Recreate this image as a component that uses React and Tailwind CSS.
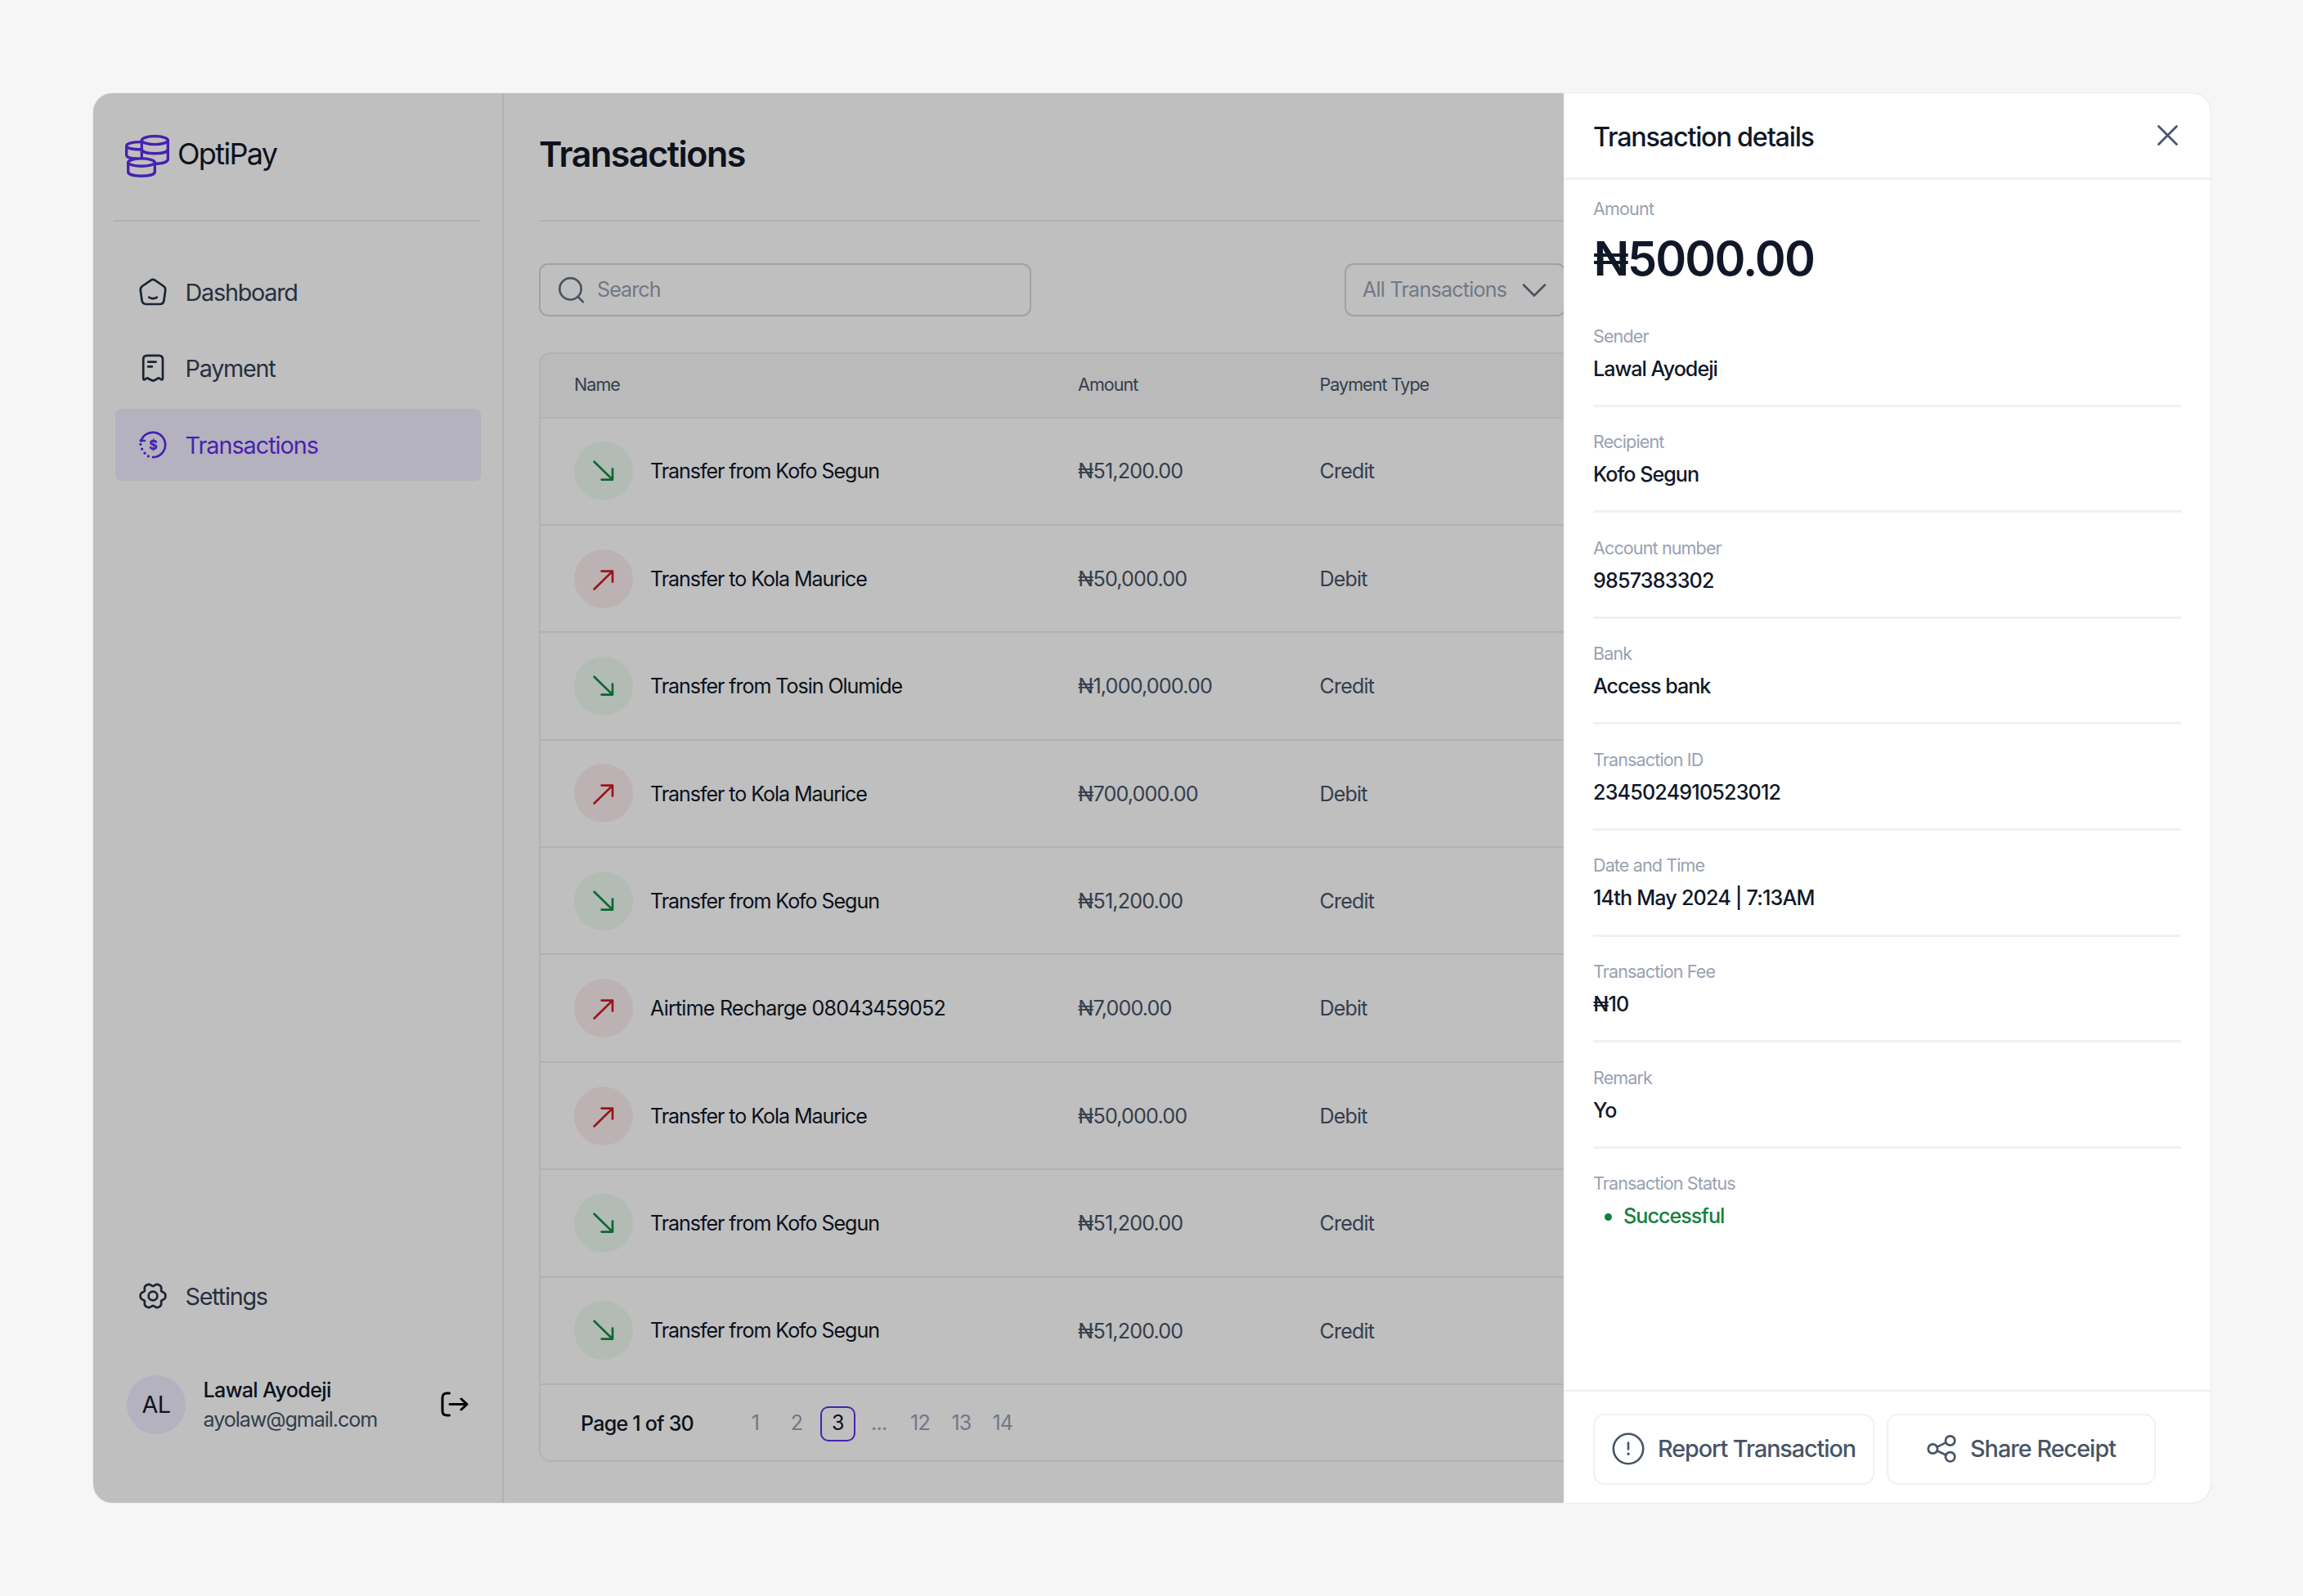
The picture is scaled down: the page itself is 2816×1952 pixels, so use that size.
import { useState } from 'react';

const transactions = [
    { name: 'Transfer from Kofo Segun', amount: '₦51,200.00', type: 'Credit' },
    { name: 'Transfer to Kola Maurice', amount: '₦50,000.00', type: 'Debit' },
    { name: 'Transfer from Tosin Olumide', amount: '₦1,000,000.00', type: 'Credit' },
    { name: 'Transfer to Kola Maurice', amount: '₦700,000.00', type: 'Debit' },
    { name: 'Transfer from Kofo Segun', amount: '₦51,200.00', type: 'Credit' },
    { name: 'Airtime Recharge 08043459052', amount: '₦7,000.00', type: 'Debit' },
    { name: 'Transfer to Kola Maurice', amount: '₦50,000.00', type: 'Debit' },
    { name: 'Transfer from Kofo Segun', amount: '₦51,200.00', type: 'Credit' },
    { name: 'Transfer from Kofo Segun', amount: '₦51,200.00', type: 'Credit' },
];

const details = [
    { label: 'Sender', value: 'Lawal Ayodeji' },
    { label: 'Recipient', value: 'Kofo Segun' },
    { label: 'Account number', value: '9857383302' },
    { label: 'Bank', value: 'Access bank' },
    { label: 'Transaction ID', value: '2345024910523012' },
    { label: 'Date and Time', value: '14th May 2024 | 7:13AM' },
    { label: 'Transaction Fee', value: '₦10' },
    { label: 'Remark', value: 'Yo' },
];

const pages = ['1', '2', '3', '...', '12', '13', '14'];

const hasDigits = (text) => /\d/.test(text);

function Icon({ size = 36, width = 2.7, className, children }) {
    return (
        <svg
            width={size} height={size} viewBox="0 0 36 36" fill="none" stroke="currentColor"
            strokeWidth={width} strokeLinecap="round" strokeLinejoin="round" className={className}
        >
            {children}
        </svg>
    );
}

function Logo() {
    return (
        <svg width="54" height="52" viewBox="0 0 54 52" fill="none" stroke="#5f2eea" strokeWidth="3.4" strokeLinecap="round" strokeLinejoin="round">
            <ellipse cx="36.3" cy="6.6" rx="16" ry="5" />
            <path d="M20.3 6.6V28.5M52.3 6.6V29.5C52.3 33 46.5 35 38 35.2M20.3 17.5C20.3 20.8 27.5 22.7 36.3 22.7S52.3 20.8 52.3 17.5" />
            <path d="M20 8.6C9 8.6 1.7 10.4 1.7 13.4S9 17.8 20 17.8M1.7 13.4V24.8C1.7 27.4 6.5 29 15 29.1" />
            <ellipse cx="20" cy="33.6" rx="16.3" ry="4.7" />
            <path d="M3.7 33.6V45.3C3.7 48.4 11 50.3 20 50.3S36.3 48.4 36.3 45.3V33.6" />
        </svg>
    );
}

function HomeIcon() {
    return (
        <Icon>
            <path d="M18 2.9C19 2.9 19.8 3.2 20.7 3.8L31 11Q33.6 12.9 33.2 16L31.5 28.2Q30.9 33 26.2 33H9.8Q5.1 33 4.5 28.2L2.8 16Q2.4 12.9 5 11L15.3 3.8C16.2 3.2 17 2.9 18 2.9Z" />
            <path d="M13.2 24.6Q18 27.6 22.8 24.6" />
        </Icon>
    );
}

function ReceiptIcon() {
    return (
        <Icon>
            <path d="M6.2 7.5Q6.2 2.8 10.9 2.8H25.3Q30 2.8 30 7.5V30.6Q30 33.4 27.6 31.9L26.4 31Q24.8 29.9 23.4 31.2L20 33Q18.1 34.2 16.2 33L12.8 31.2Q11.4 29.9 9.8 31L8.6 31.9Q6.2 33.4 6.2 30.6Z" />
            <path d="M12.2 10.6H21.6M12.2 16.4H16.8" />
        </Icon>
    );
}

function HistoryIcon() {
    return (
        <Icon>
            <path d="M3.4 13.5A15.2 15.2 0 1 1 18 33.2" />
            <path d="M2.8 12.8L8 13" />
            <path d="M2.9 17.4V17.4M4.6 23.2V23.2M8 28.2V28.2M12.4 31.9V31.9" strokeWidth="3.4" />
            <text x="18" y="23.6" textAnchor="middle" fill="currentColor" stroke="currentColor" strokeWidth="0.3" className="font-[Inter] text-[16px] font-bold">$</text>
        </Icon>
    );
}

// six rounded teeth traced in polar coordinates
const gearPath = Array.from({ length: 120 }, (_, i) => {
    const t = (i / 120) * Math.PI * 2;
    const r = 14 + 1.7 * Math.cos(6 * t) - 0.35 * Math.cos(12 * t);
    return `${i ? 'L' : 'M'}${(18 + r * Math.cos(t)).toFixed(2)} ${(18 + r * Math.sin(t)).toFixed(2)}`;
}).join('') + 'Z';

function GearIcon() {
    return (
        <Icon>
            <path d={gearPath} />
            <circle cx="18" cy="18" r="5.4" />
        </Icon>
    );
}

const navItems = [
    { label: 'Dashboard', icon: HomeIcon },
    { label: 'Payment', icon: ReceiptIcon },
    { label: 'Transactions', icon: HistoryIcon },
];

function NavItem({ label, icon: IconComponent, active, onClick }) {
    return (
        <button
            onClick={onClick}
            className={`flex h-[87.5px] w-[447px] items-center gap-[21.5px] rounded-[7px] pl-[28.6px] text-[28.7px] ${active ? 'bg-[#f1eeff] tracking-[-0.034em] text-[#5f2eea]' : 'tracking-[-0.042em] text-[#344054]'}`}
        >
            <span className={active ? '' : 'text-[#243044]'}><IconComponent /></span>
            <span className="pt-px">{label}</span>
        </button>
    );
}

function Sidebar() {
    const [current, setCurrent] = useState('Transactions');

    return (
        <aside className="flex w-[502px] shrink-0 flex-col border-r-2 border-[#eceef0] pr-[26px] pb-[84px] pl-[24.5px]">
            <div className="flex h-[156.5px] items-start gap-[10px] border-b-2 border-[#eceef0] pt-[51px] pl-[14.5px]">
                <Logo />
                <span className="mt-[-2px] text-[36px] leading-[50px] tracking-[-0.046em] text-[#101828]">OptiPay</span>
            </div>

            <nav className="mt-[42.5px] ml-[2px] flex flex-col gap-[6px]">
                {navItems.map(item => (
                    <NavItem key={item.label} {...item} active={item.label === current} onClick={() => setCurrent(item.label)} />
                ))}
            </nav>

            <div className="mt-auto ml-[2px]">
                <NavItem label="Settings" icon={GearIcon} active={current === 'Settings'} onClick={() => setCurrent('Settings')} />
            </div>

            <div className="mt-[53.5px] flex items-center pl-[16.5px]">
                <div className="flex size-[72px] items-center justify-center rounded-full bg-[#f1eeff] text-[28.7px] tracking-[-0.02em] text-[#101828]">AL</div>
                <div className="ml-[21.5px] text-[25.1px] leading-[36px]">
                    <p className="font-medium tracking-[-0.026em] text-[#101828]">Lawal Ayodeji</p>
                    <p className="tracking-[-0.042em] text-[#475467]">ayolaw@gmail.com</p>
                </div>
                <svg width="34" height="31" viewBox="0 0 34 31" fill="none" stroke="#000" strokeWidth="3" strokeLinecap="round" strokeLinejoin="round" className="mr-[15px] mb-[2px] ml-auto">
                    <path d="M10.5 2H7.5Q2 2 2 7.5V23.5Q2 29 7.5 29H10.5M11 15.5H32M25 9L32 15.5L25 22" />
                </svg>
            </div>
        </aside>
    );
}

function TransactionRow({ name, amount, type }) {
    const isCredit = type === 'Credit';
    return (
        <div className="grid h-[131.4px] grid-cols-[616px_295.5px_1fr] items-center border-b-2 border-[#eceef0] pl-[41px] text-[25.1px] tracking-[-0.033em] text-[#475467]">
            <div className={`flex items-center gap-[21px] text-[#101828] ${hasDigits(name) ? 'tracking-[-0.032em]' : 'tracking-[-0.043em]'}`}>
                <span className={`flex size-[72px] items-center justify-center rounded-full ${isCredit ? 'bg-[#eefaf1] text-[#128a43]' : 'bg-[#fbeeef] text-[#cc1e26]'}`}>
                    <Icon>
                        {isCredit
                            ? <path d="M6.6 6.8L29 28.6M29 15.6V28.6H15.6" />
                            : <path d="M6.6 30.5L29 8.6M29 21.6V8.6H15.6" />}
                    </Icon>
                </span>
                <span className="pt-[2px]">{name}</span>
            </div>
            <span className="pt-[2px]">{amount}</span>
            <span className="pt-[2px]">{type}</span>
        </div>
    );
}

function Main() {
    const [page, setPage] = useState('3');

    return (
        <main className="flex-1 px-[43px]">
            <header className="flex h-[156.5px] items-start border-b-2 border-[#eceef0] pt-[48px]">
                <h1 className="text-[43px] leading-[52px] font-semibold tracking-[-0.034em] text-[#101828]">Transactions</h1>
            </header>

            <div className="mt-[51.5px] flex gap-[383.5px] text-[25.1px]">
                <div className="flex h-[65px] w-[601.5px] items-center gap-[13px] rounded-[11px] border-2 border-[#d5d8dc] pl-[20px]">
                    <Icon className="text-[#667085]">
                        <circle cx="16.5" cy="16.3" r="13.2" />
                        <path d="M26 26.2L32 32.4" />
                    </Icon>
                    <input type="text" placeholder="Search" className="flex-1 pt-px tracking-[-0.038em] outline-none placeholder:text-[#98a2b3]" />
                </div>
                <button className="flex h-[65px] w-[271px] items-center justify-between rounded-[11px] border-2 border-[#d5d8dc] pr-[19px] pl-[20px] tracking-[-0.031em] text-[#98a2b3]">
                    <span className="pt-px">All Transactions</span>
                    <Icon className="text-[#667085]">
                        <path d="M5 11.5L18 24.5L31 11.5" />
                    </Icon>
                </button>
            </div>

            <div className="mt-[44px] overflow-hidden rounded-[14px] border-2 border-[#eceef0]">
                <div className="grid h-[78.5px] grid-cols-[616px_295.5px_1fr] items-center border-b-2 border-[#eceef0] bg-[#f8f9fa] pb-[3px] pl-[41px] text-[21.5px] tracking-[-0.044em] text-[#475467]">
                    <span>Name</span>
                    <span>Amount</span>
                    <span>Payment Type</span>
                </div>
                {transactions.map((tx, i) => <TransactionRow key={i} {...tx} />)}
                <div className="flex h-[92px] items-center pt-[2px] pl-[49px] text-[25.1px] tracking-[-0.032em]">
                    <p className="w-[192px] pt-px font-medium text-[#101828]">Page 1 of 30</p>
                    <div className="flex gap-[7.4px]">
                        {pages.map(p => (
                            <button
                                key={p} onClick={() => setPage(p)}
                                className={`h-[43px] w-[43px] rounded-[10px] ${p === page ? 'border-2 border-[#5f2eea] text-[#101828]' : 'text-[#98a2b3]'}`}
                            >
                                {p}
                            </button>
                        ))}
                    </div>
                </div>
            </div>
        </main>
    );
}

function DetailsPanel() {
    return (
        <section className="absolute inset-y-0 right-0 flex w-[791px] flex-col bg-white">
            <header className="flex h-[106px] items-center justify-between border-b-3 border-[#f0f1f2] pr-[39px] pl-[36px]">
                <h2 className="pt-[5px] text-[32.3px] font-medium tracking-[-0.037em] text-[#101828]">Transaction details</h2>
                <button>
                    <svg width="27" height="27" viewBox="0 0 27 27" fill="none" stroke="#475467" strokeWidth="2.7" strokeLinecap="round">
                        <path d="M2.5 2.5L24.5 24.5M24.5 2.5L2.5 24.5" />
                    </svg>
                </button>
            </header>

            <div className="flex flex-1 flex-col px-[36px] pt-[18px]">
                <p className="text-[21.5px] leading-[34px] tracking-[-0.038em] text-[#98a2b3]">Amount</p>
                <p className="mt-[4px] mb-[12px] text-[57.5px] leading-[80px] font-semibold tracking-[-0.032em] text-[#101828]">₦5000.00</p>
                {details.map(item => (
                    <div key={item.label} className="h-[129.6px] shrink-0 border-b-3 border-[#f0f1f2] pt-[25.5px]">
                        <p className="text-[21.5px] leading-[34px] tracking-[-0.04em] text-[#98a2b3]">{item.label}</p>
                        <p className={`mt-[4px] text-[25.1px] leading-[38px] font-medium text-[#101828] ${hasDigits(item.value) ? 'tracking-[-0.032em]' : 'tracking-[-0.039em]'}`}>{item.value}</p>
                    </div>
                ))}
                <p className="mt-[25.5px] text-[21.5px] leading-[34px] tracking-[-0.04em] text-[#98a2b3]">Transaction Status</p>
                <p className="mt-[4px] flex items-center pl-[14px] text-[25.1px] leading-[38px] font-medium tracking-[-0.038em] text-[#15803d]">
                    <span className="mt-[3px] mr-[14px] size-[9px] rounded-full bg-[#15803d]" />
                    Successful
                </p>
            </div>

            <footer className="flex h-[138.5px] gap-[15px] border-t-2 border-[#eceef0] pt-[27px] pl-[36px] text-[28.7px] font-medium tracking-[-0.036em] text-[#475467]">
                <button className="flex h-[87px] w-[344px] items-center gap-[16px] rounded-[14px] border-2 border-[#eff1f2] pl-[21px]">
                    <svg width="40" height="40" viewBox="0 0 40 40" fill="none" stroke="currentColor" strokeWidth="2.6" strokeLinecap="round">
                        <circle cx="20" cy="20" r="18.2" />
                        <path d="M20 12.5V20.5" />
                        <path d="M20 26.2V26.2" strokeWidth="3.4" />
                    </svg>
                    Report Transaction
                </button>
                <button className="flex h-[87px] w-[329px] items-center gap-[17px] rounded-[14px] border-2 border-[#eff1f2] pl-[47px] tracking-[-0.033em]">
                    <Icon>
                        <circle cx="7.4" cy="18" r="5.7" />
                        <circle cx="28.6" cy="8" r="5.7" />
                        <circle cx="28.6" cy="27.8" r="5.7" />
                        <path d="M12.6 15.6L23.4 10.4M12.6 20.4L23.4 25.4" />
                    </Icon>
                    Share Receipt
                </button>
            </footer>
        </section>
    );
}

export default function App() {
    return (
        <div className="h-[1952px] w-[2816px] bg-[#f6f6f6] pt-[113px] pl-[113px] font-[Inter,sans-serif]">
            <div className="relative flex h-[1726px] w-[2591px] overflow-hidden rounded-[24px] border border-[#ececec] bg-white">
                <Sidebar />
                <Main />
                <div className="absolute inset-0 bg-black/25" />
                <DetailsPanel />
            </div>
        </div>
    );
}
